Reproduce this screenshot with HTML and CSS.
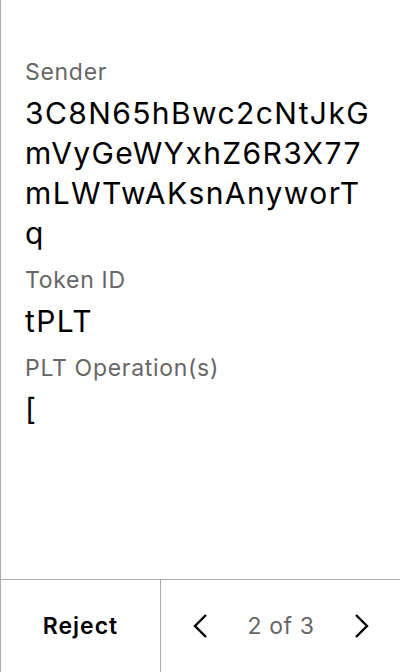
FILE: index.html
```html
<!DOCTYPE html>
<html lang="en">
<head>
  <meta charset="UTF-8">
  <meta name="viewport" content="width=device-width, initial-scale=1.0">
  <title>Transaction details</title>
  <link rel="stylesheet" href="styles.css">
</head>
<body>
  <div class="screen">
    <!-- Transaction details -->
    <div class="details">
      <div class="label">Sender</div>
      <div class="value">3C8N65hBwc2cNtJkGmVyGeWYxhZ6R3X77mLWTwAKsnAnyworTq</div>

      <div class="label">Token ID</div>
      <div class="value">tPLT</div>

      <div class="label">PLT Operation(s)</div>
      <div class="value">[</div>
    </div>

    <!-- Footer actions -->
    <div class="footer">
      <button class="reject">Reject</button>
      <div class="pager">
        <button class="arrow" aria-label="Previous">
          <svg width="16" height="24" viewBox="0 0 16 24"><path d="M14 1 L3 12 L14 23" fill="none" stroke="#000" stroke-width="2.4"/></svg>
        </button>
        <span class="count">2 of 3</span>
        <button class="arrow" aria-label="Next">
          <svg width="16" height="24" viewBox="0 0 16 24"><path d="M2 1 L13 12 L2 23" fill="none" stroke="#000" stroke-width="2.4"/></svg>
        </button>
      </div>
    </div>
  </div>
</body>
</html>
```

FILE: styles.css
```css
/* Page */
body {
  margin: 0;
  font-family: Inter, 'Noto Sans', sans-serif;
  background-color: #ffffff;
  color: #000;
}

.screen {
  width: 400px;
  height: 672px;
  box-sizing: border-box;
  border-left: 1px solid #aaa;
  display: flex;
  flex-direction: column;
}

/* Details list */
.details {
  flex: 1;
  padding: 58px 24px 0 24px;
}

.label {
  font-size: 23px;
  line-height: 28px;
  letter-spacing: 0.7px;
  color: #666;
}

.value {
  font-size: 30px;
  line-height: 40px;
  letter-spacing: 1.4px;
  margin: 7px 0 13px;
  word-break: break-all;
}

/* Footer */
.footer {
  height: 92px;
  border-top: 1px solid #aaa;
  display: flex;
}

button {
  font-family: inherit;
  background: none;
  border: none;
  padding: 0;
  cursor: pointer;
  color: #000;
}

.reject {
  width: 160px;
  border-right: 1px solid #aaa;
  font-size: 23px;
  font-weight: 600;
  letter-spacing: 1px;
}

.pager {
  flex: 1;
  display: flex;
  align-items: center;
  justify-content: space-between;
  padding: 0 30px 0 31px;
}

.arrow {
  display: flex;
  align-items: center;
}

.count {
  font-size: 23px;
  letter-spacing: 0.6px;
  color: #666;
}
```
